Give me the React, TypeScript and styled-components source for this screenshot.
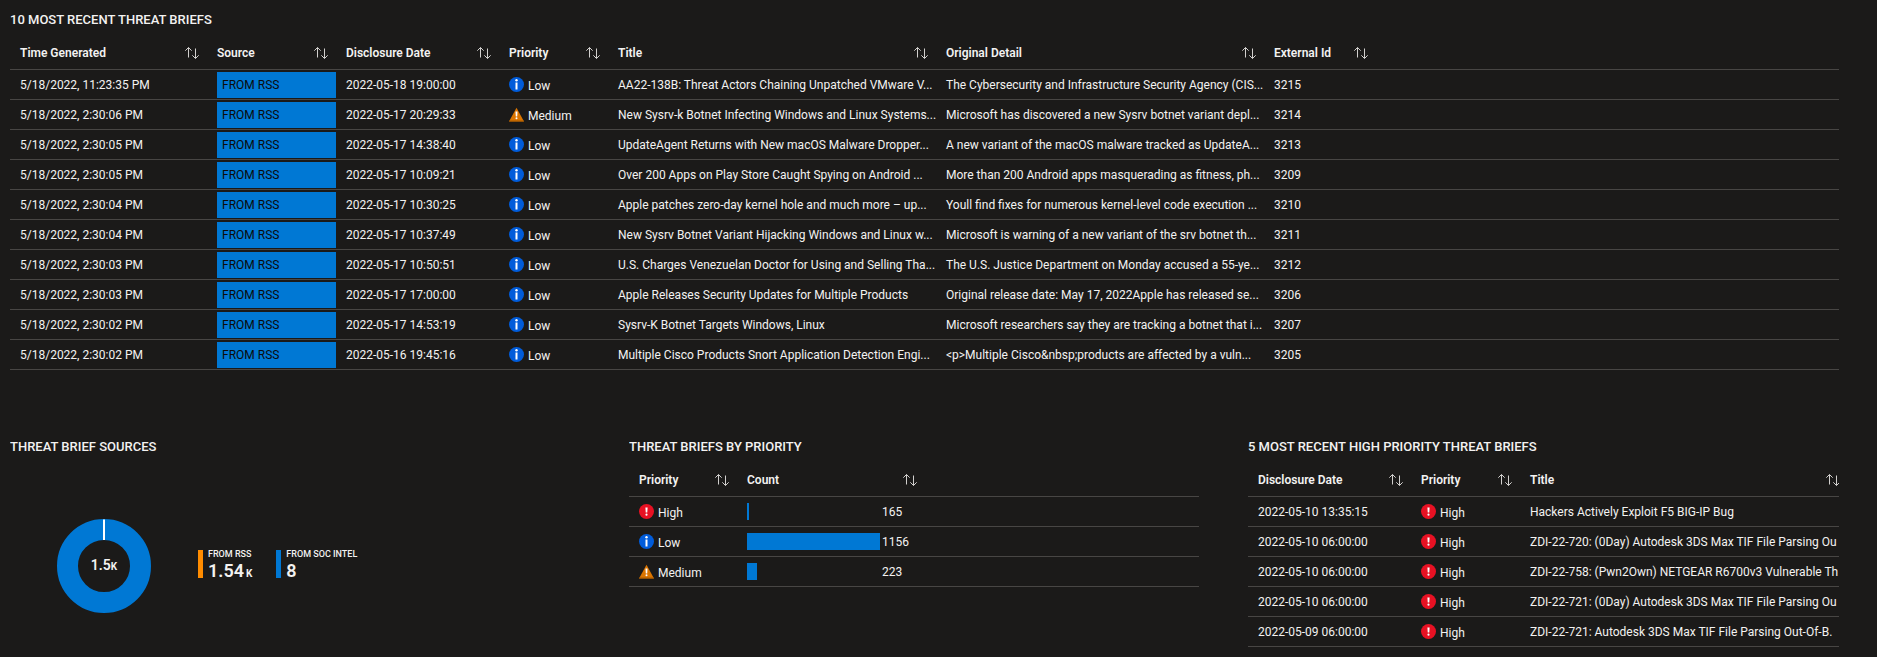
import React from "react";
import styled, { createGlobalStyle } from "styled-components";

const GlobalStyle = createGlobalStyle`
  *, *::before, *::after { box-sizing: border-box; }
  body {
    margin: 0;
    background: #1b1a19;
    color: #f3f2f1;
    font-family: Roboto, "Open Sans", sans-serif;
    font-size: 12px;
    line-height: 16px;
  }
`;

const Page = styled.main`
  padding: 10px 38px 10px 10px;
`;

const Panels = styled.div`
  display: grid;
  grid-template-columns: 570fr 570fr 591fr;
  column-gap: 49px;
  margin-top: 67px;
`;

const Panel = styled.section`
  min-width: 0;
  overflow: hidden;
`;

const Heading = styled.h2`
  margin: 0;
  height: 20px;
  font-size: 13px;
  line-height: 20px;
  font-weight: 500;
  text-transform: uppercase;
`;

const Table = styled.table<{ $width?: string }>`
  width: ${(p) => p.$width ?? "100%"};
  margin-top: 8px;
  table-layout: fixed;
  border-collapse: separate;
  border-spacing: 0;
`;

const HeadCell = styled.th<{ $width?: number }>`
  width: ${(p) => (p.$width ? `${p.$width}px` : "auto")};
  height: 32px;
  padding: 0;
  text-align: left;
  border-bottom: 1px solid #484644;
`;

const SortButton = styled.button<{ $width?: number }>`
  display: flex;
  align-items: center;
  justify-content: space-between;
  width: ${(p) => (p.$width ? `${p.$width}px` : "100%")};
  height: 31px;
  padding: 0 7px 2px 10px;
  border: 0;
  background: none;
  color: inherit;
  font: inherit;
  font-weight: 600;
  cursor: pointer;
`;

const Cell = styled.td`
  height: 30px;
  padding: 0 0 0 10px;
  border-bottom: 1px solid #484644;
  white-space: nowrap;
  overflow: hidden;
`;

const SourceTag = styled.div`
  height: 26px;
  padding: 0 5px;
  background: #0078d4;
  color: #0b0b0b;
  line-height: 26px;
`;

const PriorityLabel = styled.span`
  display: flex;
  align-items: center;
  gap: 4px;
`;

const PriorityText = styled.span`
  padding-top: 2px;
`;

const CountValue = styled.div`
  display: flex;
  align-items: center;
  gap: 2px;
`;

const BarTrack = styled.div`
  width: 133px;
  height: 17px;
`;

const Bar = styled.div`
  height: 100%;
  background: #0078d4;
`;

const SourceChart = styled.div`
  display: flex;
  align-items: center;
  padding: 62px 0 0 47px;
`;

const Donut = styled.figure`
  position: relative;
  width: 94px;
  height: 94px;
  margin: 0;
`;

const DonutTotal = styled.figcaption`
  position: absolute;
  inset: 0;
  display: flex;
  align-items: center;
  justify-content: center;
  font-size: 14px;
  font-weight: 600;
`;

const Unit = styled.span`
  font-size: 10px;
  font-weight: 700;
`;

const Legend = styled.ul`
  display: flex;
  gap: 24px;
  margin: 0 0 4px 47px;
  padding: 0;
  list-style: none;
`;

const LegendItem = styled.li<{ $color: string }>`
  height: 28px;
  padding-left: 5px;
  border-left: 5px solid ${(p) => p.$color};
`;

const LegendName = styled.div`
  font-size: 9px;
  line-height: 8px;
  font-weight: 500;
`;

const LegendValue = styled.div`
  display: flex;
  align-items: baseline;
  gap: 2px;
  font-size: 18px;
  line-height: 26px;
  font-weight: 600;
`;

type Level = "Low" | "Medium" | "High";

const SortIcon = () => (
  <svg width="16" height="14" viewBox="0 0 16 14" fill="none" stroke="#d2d0ce" aria-hidden="true">
    <path d="M4.5 11.5V1.5M1.3 4.7L4.5 1.5L7.7 4.7M11.5 2.5V12.5M8.3 9.3L11.5 12.5L14.7 9.3" />
  </svg>
);

const PriorityIcon = ({ level }: { level: Level }) => {
  if (level === "Medium") {
    return (
      <svg width="15" height="15" viewBox="0 0 15 15" aria-hidden="true">
        <path d="M7.5 0.8L15 14.4H0Z" fill="#db7500" />
        <path d="M0.4 13.5H14.6L15 14.4H0Z" fill="#a85a00" />
        <path d="M6.5 4.5H8.5L8.2 9.4H6.8Z" fill="#fff" />
        <circle cx="7.5" cy="11.2" r="1" fill="#fff" />
      </svg>
    );
  }
  if (level === "High") {
    return (
      <svg width="15" height="15" viewBox="0 0 15 15" aria-hidden="true">
        <circle cx="7.5" cy="7.5" r="7.5" fill="#e81123" />
        <path d="M6.4 3.5H8.6L8.3 8.6H6.7Z" fill="#fff" />
        <circle cx="7.5" cy="10.7" r="1.1" fill="#fff" />
      </svg>
    );
  }
  return (
    <svg width="15" height="15" viewBox="0 0 15 15" aria-hidden="true">
      <circle cx="7.5" cy="7.5" r="7.5" fill="#015cda" />
      <circle cx="7.5" cy="3.3" r="1.2" fill="#fff" />
      <path d="M6.5 5.5H8.5V12.5H6.5Z" fill="#fff" />
    </svg>
  );
};

const Priority = ({ level }: { level: Level }) => (
  <PriorityLabel>
    <PriorityIcon level={level} />
    <PriorityText>{level}</PriorityText>
  </PriorityLabel>
);

type Column = { label: string; width?: number; buttonWidth?: number };

const Head = ({ columns }: { columns: Column[] }) => (
  <thead>
    <tr>
      {columns.map((c) => (
        <HeadCell key={c.label} scope="col" $width={c.width}>
          <SortButton type="button" $width={c.buttonWidth}>
            {c.label}
            <SortIcon />
          </SortButton>
        </HeadCell>
      ))}
    </tr>
  </thead>
);

const briefColumns: Column[] = [
  { label: "Time Generated", width: 197 },
  { label: "Source", width: 129 },
  { label: "Disclosure Date", width: 163 },
  { label: "Priority", width: 109 },
  { label: "Title", width: 328 },
  { label: "Original Detail", width: 328 },
  { label: "External Id", buttonWidth: 112 },
];

const briefs: [string, string, Level, string, string, string][] = [
  ["5/18/2022, 11:23:35 PM", "2022-05-18 19:00:00", "Low", "AA22-138B: Threat Actors Chaining Unpatched VMware V...", "The Cybersecurity and Infrastructure Security Agency (CIS...", "3215"],
  ["5/18/2022, 2:30:06 PM", "2022-05-17 20:29:33", "Medium", "New Sysrv-k Botnet Infecting Windows and Linux Systems...", "Microsoft has discovered a new Sysrv botnet variant depl...", "3214"],
  ["5/18/2022, 2:30:05 PM", "2022-05-17 14:38:40", "Low", "UpdateAgent Returns with New macOS Malware Dropper...", "A new variant of the macOS malware tracked as UpdateA...", "3213"],
  ["5/18/2022, 2:30:05 PM", "2022-05-17 10:09:21", "Low", "Over 200 Apps on Play Store Caught Spying on Android ...", "More than 200 Android apps masquerading as fitness, ph...", "3209"],
  ["5/18/2022, 2:30:04 PM", "2022-05-17 10:30:25", "Low", "Apple patches zero-day kernel hole and much more – up...", "Youll find fixes for numerous kernel-level code execution ...", "3210"],
  ["5/18/2022, 2:30:04 PM", "2022-05-17 10:37:49", "Low", "New Sysrv Botnet Variant Hijacking Windows and Linux w...", "Microsoft is warning of a new variant of the srv botnet th...", "3211"],
  ["5/18/2022, 2:30:03 PM", "2022-05-17 10:50:51", "Low", "U.S. Charges Venezuelan Doctor for Using and Selling Tha...", "The U.S. Justice Department on Monday accused a 55-ye...", "3212"],
  ["5/18/2022, 2:30:03 PM", "2022-05-17 17:00:00", "Low", "Apple Releases Security Updates for Multiple Products", "Original release date: May 17, 2022Apple has released se...", "3206"],
  ["5/18/2022, 2:30:02 PM", "2022-05-17 14:53:19", "Low", "Sysrv-K Botnet Targets Windows, Linux", "Microsoft researchers say they are tracking a botnet that i...", "3207"],
  ["5/18/2022, 2:30:02 PM", "2022-05-16 19:45:16", "Low", "Multiple Cisco Products Snort Application Detection Engi...", "<p>Multiple Cisco&nbsp;products are affected by a vuln...", "3205"],
];

const countColumns: Column[] = [
  { label: "Priority", width: 108 },
  { label: "Count", buttonWidth: 188 },
];

const counts: [Level, number][] = [
  ["High", 165],
  ["Low", 1156],
  ["Medium", 223],
];

const minCount = Math.min(...counts.map(([, n]) => n));
const maxCount = Math.max(...counts.map(([, n]) => n));
const barWidth = (n: number) => Math.round(2 + (131 * (n - minCount)) / (maxCount - minCount));

const highColumns: Column[] = [
  { label: "Disclosure Date", width: 163 },
  { label: "Priority", width: 109 },
  { label: "Title", width: 328 },
];

const highBriefs: [string, string][] = [
  ["2022-05-10 13:35:15", "Hackers Actively Exploit F5 BIG-IP Bug"],
  ["2022-05-10 06:00:00", "ZDI-22-720: (0Day) Autodesk 3DS Max TIF File Parsing Ou"],
  ["2022-05-10 06:00:00", "ZDI-22-758: (Pwn2Own) NETGEAR R6700v3 Vulnerable Th"],
  ["2022-05-10 06:00:00", "ZDI-22-721: (0Day) Autodesk 3DS Max TIF File Parsing Ou"],
  ["2022-05-09 06:00:00", "ZDI-22-721: Autodesk 3DS Max TIF File Parsing Out-Of-B."],
];

export default function App() {
  return (
    <Page>
      <GlobalStyle />
      <section>
        <Heading>10 most recent threat briefs</Heading>
        <Table>
          <Head columns={briefColumns} />
          <tbody>
            {briefs.map(([time, date, level, title, detail, id]) => (
              <tr key={id}>
                <Cell>{time}</Cell>
                <Cell>
                  <SourceTag>FROM RSS</SourceTag>
                </Cell>
                <Cell>{date}</Cell>
                <Cell>
                  <Priority level={level} />
                </Cell>
                <Cell>{title}</Cell>
                <Cell>{detail}</Cell>
                <Cell>{id}</Cell>
              </tr>
            ))}
          </tbody>
        </Table>
      </section>
      <Panels>
        <Panel>
          <Heading>Threat brief sources</Heading>
          <SourceChart>
            <Donut>
              <svg width="94" height="94" viewBox="0 0 94 94" aria-hidden="true">
                <circle cx="47" cy="47" r="36.5" fill="none" stroke="#0078d4" strokeWidth="21" />
                <path d="M46 0.5H48V21H46Z" fill="#fff" />
              </svg>
              <DonutTotal>
                <span>
                  1.5<Unit>K</Unit>
                </span>
              </DonutTotal>
            </Donut>
            <Legend>
              <LegendItem $color="#ff8c00">
                <LegendName>FROM RSS</LegendName>
                <LegendValue>
                  1.54<Unit>K</Unit>
                </LegendValue>
              </LegendItem>
              <LegendItem $color="#0078d4">
                <LegendName>FROM SOC INTEL</LegendName>
                <LegendValue>8</LegendValue>
              </LegendItem>
            </Legend>
          </SourceChart>
        </Panel>
        <Panel>
          <Heading>Threat briefs by priority</Heading>
          <Table>
            <Head columns={countColumns} />
            <tbody>
              {counts.map(([level, n]) => (
                <tr key={level}>
                  <Cell>
                    <Priority level={level} />
                  </Cell>
                  <Cell>
                    <CountValue>
                      <BarTrack>
                        <Bar style={{ width: barWidth(n) }} />
                      </BarTrack>
                      {n}
                    </CountValue>
                  </Cell>
                </tr>
              ))}
            </tbody>
          </Table>
        </Panel>
        <Panel>
          <Heading>5 most recent high priority threat briefs</Heading>
          <Table $width="600px">
            <Head columns={highColumns} />
            <tbody>
              {highBriefs.map(([date, title], i) => (
                <tr key={i}>
                  <Cell>{date}</Cell>
                  <Cell>
                    <Priority level="High" />
                  </Cell>
                  <Cell>{title}</Cell>
                </tr>
              ))}
            </tbody>
          </Table>
        </Panel>
      </Panels>
    </Page>
  );
}
